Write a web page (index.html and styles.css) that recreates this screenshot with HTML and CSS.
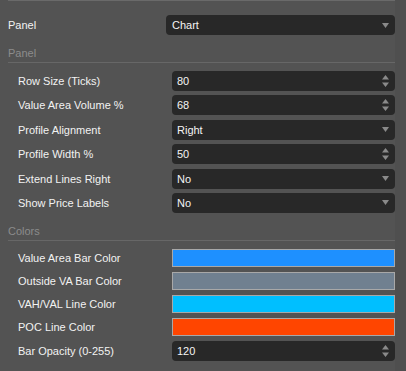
FILE: index.html
```html
<!DOCTYPE html>
<html lang="en">
<head>
    <meta charset="UTF-8">
    <meta name="viewport" content="width=device-width, initial-scale=1.0">
    <title>Volume Profile Settings</title>
    <link rel="stylesheet" href="styles.css">
</head>
<body>
    <div class="panel">
        <div class="content">
            <div class="top-row">
                <label>Panel</label>
                <div class="field select wide">
                    <span>Chart</span>
                    <svg class="arrow" width="7" height="5" viewBox="0 0 7 5"><path d="M0 0h7L3.5 5z"/></svg>
                </div>
            </div>

            <div class="section-title">Panel</div>
            <div class="group">
                <div class="row">
                    <label>Row Size (Ticks)</label>
                    <div class="field spin"><span>80</span>
                        <svg class="spinner" width="7" height="12" viewBox="0 0 7 12"><path d="M3.5 0L7 4.5H0z M0 7.5h7L3.5 12z"/></svg>
                    </div>
                </div>
                <div class="row">
                    <label>Value Area Volume %</label>
                    <div class="field spin"><span>68</span>
                        <svg class="spinner" width="7" height="12" viewBox="0 0 7 12"><path d="M3.5 0L7 4.5H0z M0 7.5h7L3.5 12z"/></svg>
                    </div>
                </div>
                <div class="row">
                    <label>Profile Alignment</label>
                    <div class="field select"><span>Right</span>
                        <svg class="arrow" width="7" height="5" viewBox="0 0 7 5"><path d="M0 0h7L3.5 5z"/></svg>
                    </div>
                </div>
                <div class="row">
                    <label>Profile Width %</label>
                    <div class="field spin"><span>50</span>
                        <svg class="spinner" width="7" height="12" viewBox="0 0 7 12"><path d="M3.5 0L7 4.5H0z M0 7.5h7L3.5 12z"/></svg>
                    </div>
                </div>
                <div class="row">
                    <label>Extend Lines Right</label>
                    <div class="field select"><span>No</span>
                        <svg class="arrow" width="7" height="5" viewBox="0 0 7 5"><path d="M0 0h7L3.5 5z"/></svg>
                    </div>
                </div>
                <div class="row">
                    <label>Show Price Labels</label>
                    <div class="field select"><span>No</span>
                        <svg class="arrow" width="7" height="5" viewBox="0 0 7 5"><path d="M0 0h7L3.5 5z"/></svg>
                    </div>
                </div>
            </div>

            <div class="section-title">Colors</div>
            <div class="group colors">
                <div class="row">
                    <label>Value Area Bar Color</label>
                    <div class="swatch" style="background: #1e90ff"></div>
                </div>
                <div class="row">
                    <label>Outside VA Bar Color</label>
                    <div class="swatch" style="background: #708090"></div>
                </div>
                <div class="row">
                    <label>VAH/VAL Line Color</label>
                    <div class="swatch" style="background: #00bfff"></div>
                </div>
                <div class="row">
                    <label>POC Line Color</label>
                    <div class="swatch" style="background: #ff4500"></div>
                </div>
                <div class="row">
                    <label>Bar Opacity (0-255)</label>
                    <div class="field spin"><span>120</span>
                        <svg class="spinner" width="7" height="12" viewBox="0 0 7 12"><path d="M3.5 0L7 4.5H0z M0 7.5h7L3.5 12z"/></svg>
                    </div>
                </div>
            </div>
        </div>
    </div>
    <div class="scrollbar"></div>
</body>
</html>
```

FILE: styles.css
```css
html, body {
    margin: 0;
    height: 100%;
}
body {
    display: flex;
    background: #535353;
    font-family: "Liberation Sans", Arial, sans-serif;
    font-size: 11px;
    color: #f2f2f2;
    overflow: hidden;
}
.panel {
    width: 395px;
    padding-left: 8px;
    box-sizing: border-box;
}
.scrollbar {
    flex: 1;
    background: #4f4f4f;
}
.content {
    border-top: 1px solid #6a6a6a;
}
.top-row {
    display: grid;
    grid-template-columns: 158px 1fr;
    align-items: center;
    margin-top: 14px;
    height: 20px;
}
.section-title {
    margin-top: 10px;
    line-height: 16px;
    padding-bottom: 1px;
    border-bottom: 1px solid #676767;
    color: #8c8c8c;
}
.group {
    display: flex;
    flex-direction: column;
    gap: 4.4px;
    padding: 8px 0 0 10px;
}
.colors {
    gap: 5px;
}
.row {
    display: grid;
    grid-template-columns: 154px 1fr;
    align-items: center;
}
.field {
    display: flex;
    align-items: center;
    justify-content: space-between;
    height: 20px;
    padding: 0 6px 0 5px;
    background: #282828;
    border-radius: 4px;
    color: #f4f4f4;
}
.field.wide {
    padding-left: 6px;
}
.field svg {
    fill: #8a8a8a;
}
.swatch {
    height: 16px;
    border: 1px solid #a8a8a8;
}
```
